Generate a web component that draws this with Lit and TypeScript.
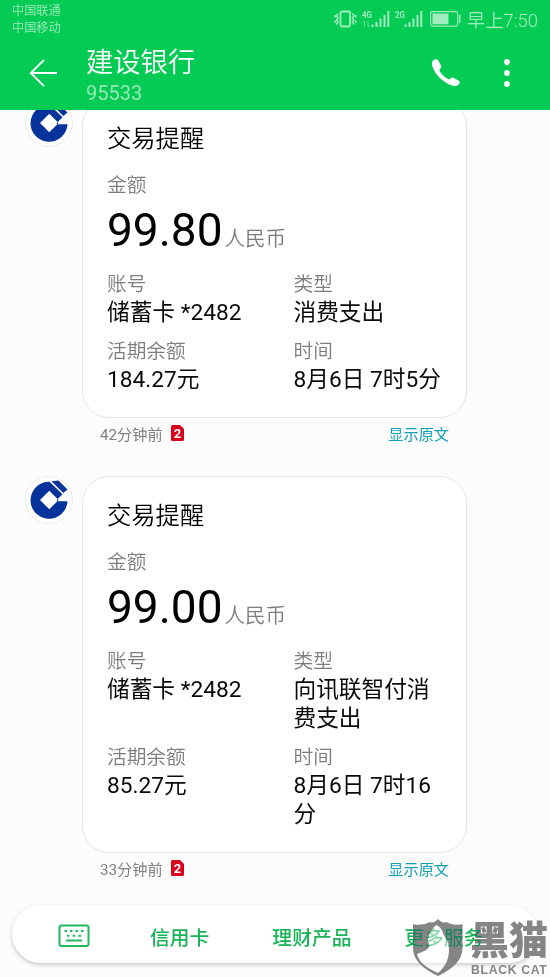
import { LitElement, html, css, svg } from "lit";
import { customElement, property } from "lit/decorators.js";

interface Field {
    label: string;
    value: string;
}

interface Message {
    amount: string;
    fields: Field[];
    ago: string;
}

const MESSAGES: Message[] = [
    {
        amount: "99.80",
        fields: [
            { label: "账号", value: "储蓄卡 *2482" },
            { label: "类型", value: "消费支出" },
            { label: "活期余额", value: "184.27元" },
            { label: "时间", value: "8月6日 7时5分" },
        ],
        ago: "42分钟前",
    },
    {
        amount: "99.00",
        fields: [
            { label: "账号", value: "储蓄卡 *2482" },
            { label: "类型", value: "向讯联智付消费支出" },
            { label: "活期余额", value: "85.27元" },
            { label: "时间", value: "8月6日 7时16分" },
        ],
        ago: "33分钟前",
    },
];

@customElement("status-bar")
export class StatusBar extends LitElement {
    renderSignal(label: string, data: boolean) {
        return html`
            <svg class="signal" width="28" height="20" viewBox="0 0 28 20">
                <text class="net" x="0" y="8.500" textLength="10" lengthAdjust="spacingAndGlyphs">${label}</text>
                ${data ? svg`<path d="M2.5 18v-6M1 13.5l1.500-1.500M6 12v6M7.500 16.500L6 18" fill="none" stroke="currentColor" opacity=".6" />` : ""}
                <path fill="currentColor" d="M9.500 15.500h2v2.500h-2zM13.500 13h2v5h-2zM17.500 9.500h2v8.500h-2zM21.500 6h2v12h-2zM25.300 2h2v16h-2z" />
            </svg>
        `;
    }

    render() {
        return html`
            <div class="carriers">
                <span>中国联通</span>
                <span>中国移动</span>
            </div>
            <div class="icons">
                <svg width="23" height="18" viewBox="0 0 23 18" fill="none" stroke="currentColor">
                    <rect x="6.500" y="1.500" width="9.500" height="15" rx="1.500" stroke-width="1.800" />
                    <path d="M4 3.500L2.500 6 4 8 2.500 10 4 12 2.500 14.500M1 5v2.500M1 10.500v2.500M18.500 3.500L20 6 18.500 8 20 10 18.500 12 20 14.500M21.800 5v2.500M21.800 10.500v2.500" stroke-width="1.500" />
                </svg>
                ${this.renderSignal("4G", true)}
                ${this.renderSignal("2G", false)}
                <svg class="battery" width="32" height="16" viewBox="0 0 32 16">
                    <rect x=".6" y=".6" width="27" height="14.500" rx="1.500" fill="none" stroke="currentColor" stroke-width="1.200" />
                    <rect x="2.500" y="2.500" width="16" height="10.800" fill="currentColor" />
                    <rect x="29" y="4" width="1.500" height="8" fill="currentColor" />
                </svg>
                <span class="clock">早上7:50</span>
            </div>
        `;
    }

    static get styles() {
        return css`
            :host {
                display: flex;
                justify-content: space-between;
                height: 38px;
                padding: 0 12px;
                color: #a0ecbd;
            }

            .carriers {
                display: flex;
                flex-direction: column;
                padding-top: 3px;
                font-size: 12.200px;
                font-weight: 350;
                line-height: 17px;
            }

            .icons {
                display: flex;
                align-items: center;
                height: 37px;
            }

            .signal {
                margin-left: 5px;
            }

            .net {
                font: 700 9.500px "Roboto", sans-serif;
                fill: currentColor;
            }

            .battery {
                margin-left: 7px;
            }

            .clock {
                margin-left: 5px;
                font-size: 18.400px;
                font-weight: 350;
            }
        `;
    }
}

@customElement("chat-header")
export class ChatHeader extends LitElement {
    render() {
        return html`
            <svg width="28" height="28" viewBox="0 0 28 28" fill="none" stroke="#fff" stroke-width="1.900">
                <path d="M28 14H2M15 .8L1.800 14 15 27.200" />
            </svg>
            <div class="contact">
                <span class="name">建设银行</span>
                <span class="number">95533</span>
            </div>
            <svg width="28" height="28" viewBox="0 0 28 28" fill="#fff">
                <path d="M1 1.500C2.500-.2 5-.2 6 1l3 5.500c.7 1.300.2 2.500-1 3.500-.6.600-.6 1.300-.2 2.200 2 3.500 4.800 6 8.400 7.900.9.400 1.400.3 2-.3 1-1.200 2.200-1.600 3.500-.9l5.300 2.800c1.200 1 .9 3-.7 4.300-1.600 1.300-4 1.400-6.300.6C11.500 23.500 3.500 16.500.6 8-.2 5.500-.4 3.100 1 1.500z" />
            </svg>
            <svg class="more" width="8" height="30" viewBox="0 0 8 30" fill="#fff">
                <circle cx="4" cy="4" r="2.900" />
                <circle cx="4" cy="15" r="2.900" />
                <circle cx="4" cy="26" r="2.900" />
            </svg>
        `;
    }

    static get styles() {
        return css`
            :host {
                display: flex;
                align-items: center;
                box-sizing: border-box;
                height: 72px;
                padding: 0 39px 2px 29px;
            }

            .contact {
                display: flex;
                flex: 1;
                flex-direction: column;
                margin-left: 29px;
                padding-top: 7px;
            }

            .name {
                font-size: 27.300px;
                font-weight: 350;
                line-height: 34px;
                color: #fff;
            }

            .number {
                font-size: 20px;
                line-height: 27px;
                color: #94e9b4;
            }

            .more {
                margin-left: 43px;
            }
        `;
    }
}

@customElement("bank-message")
export class BankMessage extends LitElement {
    @property({ attribute: false }) message!: Message;

    render() {
        const { amount, fields, ago } = this.message;

        return html`
            <div class="avatar">
                <svg width="38" height="40" viewBox="0 0 38 40">
                    <path fill="#06329b" fill-rule="evenodd" d="M37.500 21.300A18.500 18.500 0 1 1 19.500 1.800L32.500 14.300 26.500 20.300 27.500 21.300zM19.300 10.700L10 20l9.300 9.300L28.600 20z" />
                    <path fill="#06329b" d="M21.500 1.200L28.500.5l9 9-4.200 3.600z" />
                </svg>
            </div>
            <div class="body">
                <div class="card">
                    <div class="title">交易提醒</div>
                    <div class="label">金额</div>
                    <div class="amount">${amount}<span class="unit">人民币</span></div>
                    <div class="fields">
                        ${fields.map((field) => html`
                            <div>
                                <div class="label">${field.label}</div>
                                <div class="value">${field.value}</div>
                            </div>
                        `)}
                    </div>
                </div>
                <div class="meta">
                    <span>${ago}</span>
                    <svg width="13" height="16" viewBox="0 0 13 16">
                        <path fill="#d9001b" d="M1.500 0H9l4 4v10.500a1.500 1.500 0 0 1-1.500 1.500h-10A1.500 1.500 0 0 1 0 14.500v-13A1.500 1.500 0 0 1 1.500 0z" />
                        <text class="sim" x="6.500" y="12.500">2</text>
                    </svg>
                    <span class="original">显示原文</span>
                </div>
            </div>
        `;
    }

    static get styles() {
        return css`
            :host {
                display: flex;
                align-items: flex-start;
                padding-left: 25px;
            }

            .avatar {
                display: flex;
                align-items: center;
                justify-content: center;
                box-sizing: border-box;
                width: 48px;
                height: 48px;
                border: 1px solid #ececec;
                border-radius: 50%;
                background: #fff;
            }

            .body {
                width: 385px;
                margin-left: 9px;
            }

            .card {
                box-sizing: border-box;
                padding: 24px 23px 22px 24px;
                border: 1px solid #e6e6e6;
                border-radius: 27px;
                background: #fff;
            }

            .title {
                margin-bottom: 17px;
                font-size: 24.300px;
                font-weight: 350;
                line-height: 30px;
                color: #000;
            }

            .label {
                padding-top: 2px;
                font-size: 19.700px;
                font-weight: 350;
                line-height: 26px;
                color: #7c7c7c;
            }

            .amount {
                height: 46px;
                margin: 8px 0 17px;
                font-size: 46px;
                line-height: 46px;
                color: #000;
            }

            .unit {
                margin-left: 2px;
                font-size: 20.500px;
                font-weight: 350;
                color: #7c7c7c;
            }

            .fields {
                display: grid;
                grid-template-columns: 186.500px 150px;
                row-gap: 10px;
            }

            .value {
                font-size: 22.700px;
                line-height: 29.300px;
                color: #0a0a0a;
            }

            .meta {
                display: flex;
                align-items: center;
                height: 22px;
                padding: 4px 18px 0;
                font-size: 15.200px;
                color: #808080;
            }

            .meta svg {
                margin-left: 8px;
            }

            .sim {
                font: 700 13px "Roboto", sans-serif;
                fill: #fff;
                text-anchor: middle;
            }

            .original {
                margin-left: auto;
                color: #13a2b5;
            }
        `;
    }
}

@customElement("service-menu")
export class ServiceMenu extends LitElement {
    render() {
        return html`
            <svg width="32" height="24" viewBox="0 0 32 24" fill="none" stroke="#1fb85c" stroke-width="2">
                <rect x="1.500" y="1.500" width="29" height="20.500" rx="2" />
                <path d="M6.500 7h19" stroke-dasharray="2.500 3" />
                <path d="M9 11.800h14" stroke-dasharray="2.500 3.200" />
                <path d="M8 16.500h16" />
            </svg>
            <span class="credit">信用卡</span>
            <span class="finance">理财产品</span>
            <span class="others">更多服务</span>
        `;
    }

    static get styles() {
        return css`
            :host {
                display: flex;
                align-items: center;
                box-sizing: border-box;
                height: 58px;
                padding: 4px 0 0 46px;
                border-radius: 29px;
                background: #fff;
                box-shadow: 0 2px 4px rgba(0, 0, 0, 0.2);
                font-size: 19.800px;
                font-weight: 500;
                color: #17b457;
            }

            .credit {
                margin-left: 60px;
            }

            .finance {
                margin-left: 63px;
            }

            .others {
                margin-left: 53px;
            }
        `;
    }
}

@customElement("black-cat-mark")
export class BlackCatMark extends LitElement {
    render() {
        return html`
            <svg class="cat" width="50" height="59" viewBox="0 0 50 59">
                <path fill="#fff" d="M23 7C19 11 16 15 15 21c0 4 2 6 1 8C14 33 8 34 4 36 6 44 12 49 25 55 32 49 36 42 36 31 36 22 31 19 30 15 29 11 26 8 23 7z" />
            </svg>
            <svg class="shield" width="50" height="59" viewBox="0 0 50 59">
                <path fill="#858585" fill-rule="evenodd" d="M0 6C6 8 13 6 17 4 20 5.500 22 4 25 1 28 4 30 5.500 33 4 37 6 43 8 49.500 6V30C49.500 42 40 51 25 58 10 51 0 42 0 30zM23 7C19 11 16 15 15 21c0 4 2 6 1 8C14 33 8 34 4 36 6 44 12 49 25 55 32 49 36 42 36 31 36 22 31 19 30 15 29 11 26 8 23 7z" />
            </svg>
            <div class="words">
                <span class="zh">黑猫</span>
                <span class="en">BLACK CAT</span>
            </div>
        `;
    }

    static get styles() {
        return css`
            :host {
                display: grid;
                grid-template-columns: 50px auto;
                column-gap: 7px;
                color: #858585;
            }

            .cat,
            .shield {
                grid-area: 1 / 1;
            }

            .cat {
                opacity: 0.5;
            }

            /* the mark is see-through where it crosses the menu labels */
            .shield,
            .words {
                mix-blend-mode: darken;
            }

            .words {
                display: flex;
                grid-area: 1 / 2;
                flex-direction: column;
                padding-top: 2px;
                white-space: nowrap;
            }

            .zh {
                font-size: 39px;
                font-weight: 900;
                line-height: 43px;
            }

            .en {
                margin-left: 1px;
                font: 700 12.200px/14px "Liberation Sans", sans-serif;
                letter-spacing: 0.700px;
            }
        `;
    }
}

@customElement("app-root")
export class AppRoot extends LitElement {
    render() {
        return html`
            <header>
                <status-bar></status-bar>
                <chat-header></chat-header>
            </header>
            <main>
                <div class="thread">
                    ${MESSAGES.map((message) => html`<bank-message .message=${message}></bank-message>`)}
                </div>
            </main>
            <service-menu></service-menu>
            <black-cat-mark></black-cat-mark>
        `;
    }

    static get styles() {
        return css`
            :host {
                position: relative;
                display: flex;
                flex-direction: column;
                width: 550px;
                height: 977px;
                overflow: hidden;
                background: #fcfcfc;
                font-family: "Roboto", "Noto Sans CJK SC", sans-serif;
            }

            header {
                background: #04cb54;
            }

            main {
                flex: 1;
                overflow: hidden;
            }

            .thread {
                display: flex;
                flex-direction: column;
                gap: 32px;
                margin-top: -11px;
            }

            service-menu {
                margin: 0 12px 14px;
            }

            black-cat-mark {
                position: absolute;
                left: 413px;
                top: 918px;
            }
        `;
    }
}
